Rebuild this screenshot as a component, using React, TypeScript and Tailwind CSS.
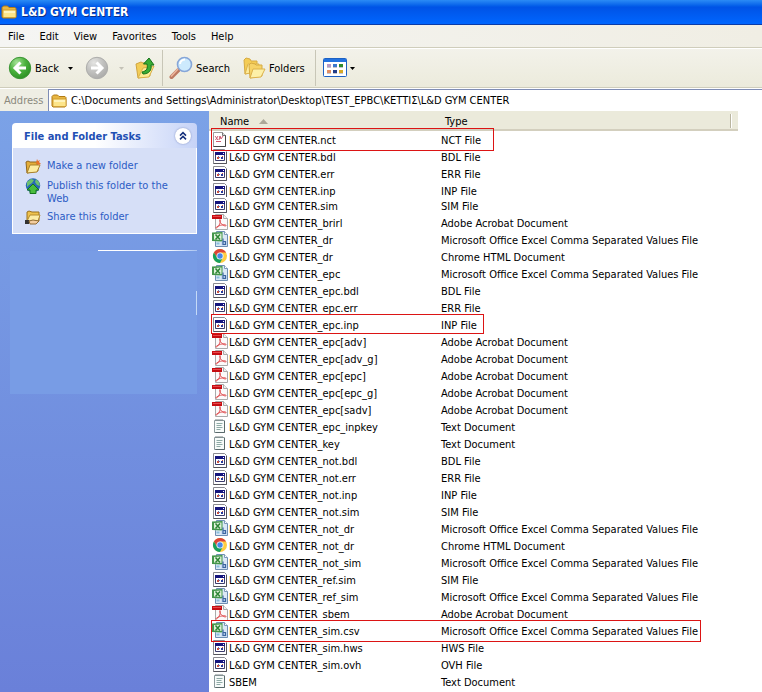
import type { ReactNode } from "react";

type Kind = "nct" | "file" | "pdf" | "xls" | "chrome" | "text";

type Entry = {
  name: string;
  type: string;
  kind: Kind;
  /** Place and size of the red outline, when the row is marked. */
  mark?: string;
  clipped?: boolean;
};

const CSV = "Microsoft Office Excel Comma Separated Values File";
const PDF = "Adobe Acrobat Document";
const HTML = "Chrome HTML Document";
const TXT = "Text Document";

const ENTRIES: Entry[] = [
  { name: "L&D GYM CENTER.nct", type: "NCT File", kind: "nct", mark: "-top-[3px] h-[23px] w-[283px]" },
  { name: "L&D GYM CENTER.bdl", type: "BDL File", kind: "file" },
  { name: "L&D GYM CENTER.err", type: "ERR File", kind: "file" },
  { name: "L&D GYM CENTER.inp", type: "INP File", kind: "file", clipped: true },
  { name: "L&D GYM CENTER.sim", type: "SIM File", kind: "file" },
  { name: "L&D GYM CENTER_brirl", type: PDF, kind: "pdf" },
  { name: "L&D GYM CENTER_dr", type: CSV, kind: "xls" },
  { name: "L&D GYM CENTER_dr", type: HTML, kind: "chrome" },
  { name: "L&D GYM CENTER_epc", type: CSV, kind: "xls" },
  { name: "L&D GYM CENTER_epc.bdl", type: "BDL File", kind: "file" },
  { name: "L&D GYM CENTER_epc.err", type: "ERR File", kind: "file" },
  { name: "L&D GYM CENTER_epc.inp", type: "INP File", kind: "file", mark: "-top-0.5 h-5 w-[273px]" },
  { name: "L&D GYM CENTER_epc[adv]", type: PDF, kind: "pdf" },
  { name: "L&D GYM CENTER_epc[adv_g]", type: PDF, kind: "pdf" },
  { name: "L&D GYM CENTER_epc[epc]", type: PDF, kind: "pdf" },
  { name: "L&D GYM CENTER_epc[epc_g]", type: PDF, kind: "pdf" },
  { name: "L&D GYM CENTER_epc[sadv]", type: PDF, kind: "pdf" },
  { name: "L&D GYM CENTER_epc_inpkey", type: TXT, kind: "text" },
  { name: "L&D GYM CENTER_key", type: TXT, kind: "text" },
  { name: "L&D GYM CENTER_not.bdl", type: "BDL File", kind: "file" },
  { name: "L&D GYM CENTER_not.err", type: "ERR File", kind: "file" },
  { name: "L&D GYM CENTER_not.inp", type: "INP File", kind: "file" },
  { name: "L&D GYM CENTER_not.sim", type: "SIM File", kind: "file" },
  { name: "L&D GYM CENTER_not_dr", type: CSV, kind: "xls" },
  { name: "L&D GYM CENTER_not_dr", type: HTML, kind: "chrome" },
  { name: "L&D GYM CENTER_not_sim", type: CSV, kind: "xls" },
  { name: "L&D GYM CENTER_ref.sim", type: "SIM File", kind: "file" },
  { name: "L&D GYM CENTER_ref_sim", type: CSV, kind: "xls" },
  { name: "L&D GYM CENTER_sbem", type: PDF, kind: "pdf" },
  { name: "L&D GYM CENTER_sim.csv", type: CSV, kind: "xls", mark: "-top-0.5 h-[22px] w-[490px]" },
  { name: "L&D GYM CENTER_sim.hws", type: "HWS File", kind: "file" },
  { name: "L&D GYM CENTER_sim.ovh", type: "OVH File", kind: "file" },
  { name: "SBEM", type: TXT, kind: "text" },
];

const MENUS = ["File", "Edit", "View", "Favorites", "Tools", "Help"];

function Svg({ children, className = "h-4 w-4" }: { children: ReactNode; className?: string }) {
  return (
    <svg viewBox="0 0 16 16" className={`shrink-0 ${className}`} aria-hidden="true">
      {children}
    </svg>
  );
}

function FileIcon({ kind }: { kind: Kind }) {
  switch (kind) {
    case "nct":
      return (
        <Svg>
          <path d="M1.5 1.5h9l3 3v11h-12z" fill="#fff" stroke="#9b9b9b" />
          <path d="M13.5 4v11.5h-12" fill="none" stroke="#444" />
          <path d="M10.5 1.5v3h3" fill="#ddd" stroke="#777" />
          <path d="M3 5l3 4M6 5l-2.500 4M7 9l1-4 1 3 2-3M4 10.500h5" fill="none" stroke="#cf5a70" />
        </Svg>
      );
    case "file":
      return (
        <Svg>
          <path d="M1.5 1.500h11l2 2v12h-13z" fill="#fff" stroke="#8a8a90" />
          <path d="M14.500 4v11.500h-13" fill="none" stroke="#55555c" />
          <path d="M3.500 4.500h9v8h-9z" fill="#fff" stroke="#3c3c6c" />
          <path d="M3 4h10v3H3z" fill="#15157d" />
          <path d="M11 5h1v1h-1z" fill="#fff" />
          <path d="M5 9h2v2H5z" fill="#c9503c" />
          <path d="M6 8h1v1H6zM7 9h1v1H7z" fill="#6472c0" />
          <path d="M9 9h2v2H9z" fill="#283b9c" />
          <path d="M10 8h1v1h-1z" fill="#c9503c" />
        </Svg>
      );
    case "pdf":
      return (
        <Svg>
          <path d="M3.500.5h8l4 4v11h-12z" fill="#fbfafa" stroke="#aaa" />
          <path d="M11.500.5v4h4" fill="#eee" stroke="#aaa" />
          <path d="M0 1h10v4H0z" fill="#c60d12" />
          <path d="M1 2h8v1H1z" fill="#e7484a" />
          <path
            d="M4.500 14c1.500-.5 4-4.500 4-7.500 0-1.500-1.200-1.200-1 0 .4 2.500 3 5 5.500 5.500 1.500.2 1.500-1 0-1.200-2.500-.3-6 .7-8.500 2.200-1 .8-.7 1.200 0 1z"
            fill="none"
            stroke="#df4a4c"
            strokeWidth=".9"
          />
        </Svg>
      );
    case "xls":
      return (
        <Svg>
          <path d="M4.500.5h8l3 3v12h-12v-5z" fill="#dbe8f6" stroke="#6f8fb3" />
          <path d="M12.500.5v3h3" fill="#fff" stroke="#7c98b8" />
          <path d="M0 1.500L10.500 1v9.500L0 10z" fill="#43964a" />
          <path d="M2 3l7.500-.5V9L2 8.500z" fill="#dff1d9" />
          <path d="M3.500 3.500l4.500 5M8 3.500l-4.500 5" stroke="#2d8535" strokeWidth="1.500" />
          <path d="M9.500 10.500h5v4h-5z" fill="#b9d0ec" />
          <path d="M11 7.500v6h2.500v-3H11" fill="none" stroke="#3c66a0" strokeWidth="1.200" />
          <path d="M4.500 11.500h3v2h-3z" fill="#8bc0dc" />
        </Svg>
      );
    case "chrome":
      return (
        <Svg>
          <circle cx="8" cy="8" r="7" fill="#ffcd41" />
          <path d="M1.900 4.500A7 7 0 0 1 14.100 4.500H8L5 9.500z" fill="#db4437" />
          <path d="M1.900 4.500A7 7 0 0 0 8 15l3-5.500H5z" fill="#16a05d" />
          <circle cx="8" cy="8" r="3.500" fill="#f5f5f5" />
          <circle cx="8" cy="8" r="2.700" fill="#4688e8" />
        </Svg>
      );
    case "text":
      return (
        <Svg>
          <path d="M2.500 2.500h10v12h-10z" fill="#f7fbfa" stroke="#8c9a9c" />
          <path d="M12.500 3v11.500h-9" fill="none" stroke="#59696b" />
          <path d="M4 1v2M6 1v2M8 1v2M10 1v2" stroke="#7a8688" />
          <path d="M4.500 5.500h6M4.500 7.500h5M4.500 9.500h6M4.500 11.500h4" stroke="#8eaaa6" />
        </Svg>
      );
  }
}

function FolderIcon({ className }: { className?: string }) {
  return (
    <Svg className={className}>
      <path d="M1 3.500L2.500 2h4L8 3.500h6l1 1V13l-1 1H2l-1-1z" fill="#e8b743" stroke="#b27b14" />
      <path d="M2 6h13v7.500H2z" fill="#fde58a" stroke="#c79329" strokeWidth=".7" />
      <path d="M3 7h11v2H3z" fill="#fff4bd" />
    </Svg>
  );
}

function Caret({ className = "" }: { className?: string }) {
  return (
    <svg viewBox="0 0 5 3" className={`h-[3px] w-[5px] ${className}`} aria-hidden="true">
      <path d="M0 0h5L2.500 3z" fill="currentColor" />
    </svg>
  );
}

function RoundArrow({ forward = false }: { forward?: boolean }) {
  const id = forward ? "forward-fill" : "back-fill";
  return (
    <svg viewBox="0 0 24 24" className="h-6 w-6 shrink-0" aria-hidden="true">
      <defs>
        <radialGradient id={id} cx=".35" cy=".25" r=".8">
          <stop offset="0" stopColor={forward ? "#e4e4e2" : "#a6e298"} />
          <stop offset=".5" stopColor={forward ? "#c3c3c1" : "#4cb33e"} />
          <stop offset="1" stopColor={forward ? "#aaaaa8" : "#2b8f22"} />
        </radialGradient>
      </defs>
      <circle cx="12" cy="12" r="10.700" fill={`url(#${id})`} stroke={forward ? "#adadab" : "#3c9535"} />
      <path
        d={forward ? "M6 12h10M11.500 6.500L17 12l-5.500 5.500" : "M18 12H8M12.500 6.500L7 12l5.500 5.500"}
        fill="none"
        stroke="#fff"
        strokeWidth="3"
      />
    </svg>
  );
}

function UpFolder() {
  return (
    <svg viewBox="0 0 22 22" className="h-[22px] w-[22px]" aria-hidden="true">
      <path d="M2 7l5-2 2 1 6-1 1 14-12 2z" fill="#f3cd57" stroke="#d0a440" />
      <path d="M4 21l5-10 11-2-5 11z" fill="#fdeb93" stroke="#d9b04a" />
      <path d="M8 15c5-1 6-4 5-8H9.500L15 1l5 7h-3c1 5-2 9-8 9z" fill="#39ad34" stroke="#17721b" />
    </svg>
  );
}

function Magnifier() {
  return (
    <svg viewBox="0 0 24 24" className="h-6 w-6" aria-hidden="true">
      <path d="M2.500 21L9.500 14" stroke="#bd7a62" strokeWidth="4" strokeLinecap="round" />
      <path d="M2 20.500L9 13" stroke="#edb79e" strokeWidth="1.500" />
      <circle cx="15.500" cy="8.500" r="7" fill="#cdeafd" stroke="#86a6d8" strokeWidth="1.600" />
      <path d="M11 8a5 5 0 0 1 5-4.500" fill="none" stroke="#fff" strokeWidth="2" />
    </svg>
  );
}

function FoldersIcon() {
  return (
    <svg viewBox="0 0 24 22" className="h-[22px] w-6" aria-hidden="true">
      <path d="M2 3l2-2 4 1 1 2h6v10L3 17z" fill="#f4cc55" stroke="#d6ab42" />
      <path d="M3 17L6 7h11l-3 8z" fill="#fdec9c" stroke="#dcb24c" />
      <path d="M7 8l2-2 4 1 1 1h6v11l-12 2z" fill="#f6d367" stroke="#d6ab42" />
      <path d="M8 21l3-9h12l-4 8z" fill="#fdf0a8" stroke="#dcb24c" />
    </svg>
  );
}

function ViewsIcon() {
  const dots = ["#b79ac4", "#3b78cd", "#2c8a2b", "#e08e63", "#203c88", "#d6a824"];
  return (
    <svg viewBox="0 0 24 20" className="h-5 w-6" aria-hidden="true">
      <rect x=".5" y=".5" width="23" height="18" rx="1" fill="#fff" stroke="#1c61c4" />
      <path d="M1 1h22v3H1z" fill="#2272df" />
      {dots.map((fill, i) => (
        <g key={fill}>
          <rect x={4 + (i % 3) * 6} y={i < 3 ? 6 : 12} width="4" height="3" fill={fill} />
          <path d={`M${4 + (i % 3) * 6} ${i < 3 ? 9.5 : 15.5}h4`} stroke="#c5c5cf" />
        </g>
      ))}
    </svg>
  );
}

function Toolbar() {
  return (
    <div className="flex h-10 items-center border-y border-t-white border-b-[#cfcdbb] bg-gradient-to-b from-[#f3f2ea] to-[#ecebdc] pl-2">
      <button type="button" className="flex items-center gap-[3px]">
        <RoundArrow />
        Back
        <Caret className="ml-1.5" />
      </button>
      <button type="button" aria-label="Forward" className="ml-3 flex items-center gap-2.5 text-[#c4c2b7]">
        <RoundArrow forward />
        <Caret />
      </button>
      <button type="button" aria-label="Up" className="ml-2.5">
        <UpFolder />
      </button>
      <span className="ml-1.5 h-9 w-px bg-[#c8c6b7]" />
      <button type="button" className="ml-1.5 flex items-center gap-[3px]">
        <Magnifier />
        Search
      </button>
      <button type="button" className="ml-3 flex items-center gap-[3px]">
        <FoldersIcon />
        Folders
      </button>
      <span className="ml-2.5 h-9 w-px bg-[#c8c6b7]" />
      <button type="button" aria-label="Views" className="ml-[7px] flex items-center gap-[3px]">
        <ViewsIcon />
        <Caret />
      </button>
    </div>
  );
}

function Task({ icon, children }: { icon: ReactNode; children: ReactNode }) {
  return (
    <li>
      <a href="#" className="flex items-start gap-1.5">
        {icon}
        <span className="pt-px">{children}</span>
      </a>
    </li>
  );
}

function Sidebar() {
  return (
    <aside className="w-[209px] shrink-0 bg-gradient-to-b from-[#7ba2e7] to-[#6a80d9] px-3 pt-3">
      <section className="text-[#2c5cc5]">
        <header className="flex h-[25px] items-center justify-between rounded-t-[4px] bg-gradient-to-r from-white from-45% to-[#c6d3f7] pr-1.5 pl-3">
          <h2 className="pt-0.5 font-bold text-[#1f50b4]">File and Folder Tasks</h2>
          <button
            type="button"
            aria-label="Collapse"
            className="flex h-4 w-4 items-center justify-center rounded-full bg-white shadow-[0_0_2px_#7b8cc0]"
          >
            <Svg className="h-3 w-3">
              <path d="M4 7.500L8 3.500l4 4M4 12.500l4-4 4 4" fill="none" stroke="#15307c" strokeWidth="2" />
            </Svg>
          </button>
        </header>
        <ul className="space-y-1 border border-t-0 border-white bg-[#d6dff7] pt-2.5 pr-5 pb-2 pl-3 leading-[13px]">
          <Task
            icon={
              <Svg>
                <path d="M1 4l2-1 2 1h7l1 9-11 2z" fill="#e4ad39" stroke="#8f661d" />
                <path d="M2 15l3-8h10l-3 7z" fill="#fdeca0" stroke="#a9812c" />
                <path d="M12 1l1 2 2-1-1 2 2 2-3 1-2-2z" fill="#e7742b" />
              </Svg>
            }
          >
            Make a new folder
          </Task>
          <Task
            icon={
              <Svg>
                <circle cx="8" cy="7.500" r="7.200" fill="#2868b5" />
                <path d="M2 4l4-3 3 1-2 3-3 2-2 2zM11 1l3 3 1 4-3-1-2-3z" fill="#6cc06f" />
                <path d="M8 6l6 6h-3v3.500H5V12H2z" fill="#49bd3e" stroke="#14761c" />
              </Svg>
            }
          >
            Publish this folder to the Web
          </Task>
          <Task
            icon={
              <Svg>
                <path d="M2 3l2-1 3 1h7v9l-12 1z" fill="#efc24d" stroke="#99701f" />
                <path d="M2 12l3-6h10l-2 6z" fill="#fdeda6" stroke="#b48b31" />
                <path d="M0 11h4v4H0z" fill="#333" />
                <path d="M4 12l4-1 6 1-3 3H5z" fill="#f3cda0" stroke="#906b32" />
              </Svg>
            }
          >
            Share this folder
          </Task>
        </ul>
      </section>
      <div className="mt-4 ml-[86px] h-px bg-gradient-to-r from-white from-70% to-[#a9c3f0]" />
      <div className="-ml-0.5 flex h-[143px] items-start justify-end bg-[#789ce5] pt-10">
        <span className="h-6 w-px bg-[#c5daf7]" />
      </div>
    </aside>
  );
}

function FileList() {
  return (
    <main className="min-w-0 flex-1 bg-white pr-6">
      <table className="w-full table-fixed border-collapse text-left">
        <colgroup>
          <col className="w-[232px]" />
          <col />
        </colgroup>
        <thead className="bg-[#ebeadb]">
          <tr>
            <th scope="col" className="p-0 font-normal">
              <div className="flex h-5 items-center gap-2.5 border-b-2 border-[#d3cfbe] pt-0.5 pl-[11px]">
                Name
                <svg viewBox="0 0 9 5" className="h-[5px] w-[9px]" aria-hidden="true">
                  <path d="M0 5h9L4.500 0z" fill="#aca899" />
                </svg>
              </div>
            </th>
            <th scope="col" className="p-0 font-normal">
              <div className="flex h-5 items-center justify-between border-b-2 border-[#d3cfbe] pt-0.5 pr-1.5 pl-1">
                Type
                <span className="h-3.5 w-0.5 border-r border-l border-r-white border-l-[#b9b5a0]" />
              </div>
            </th>
          </tr>
        </thead>
        <tbody>
          {ENTRIES.map((entry) => (
            <tr key={`${entry.name}-${entry.type}`}>
              <td className="p-0">
                <div className={`relative ${entry.clipped ? "h-[15px] overflow-hidden" : "h-[17px]"}`}>
                  <div className="flex items-start gap-px pl-[3px] leading-[19px] whitespace-nowrap">
                    <FileIcon kind={entry.kind} />
                    {entry.name}
                  </div>
                  {entry.mark && (
                    <span className={`absolute left-0.5 z-10 border border-[#dc1414] ${entry.mark}`} />
                  )}
                </div>
              </td>
              <td className="p-0">
                <div
                  className={`leading-[19px] whitespace-nowrap ${entry.clipped ? "h-[15px] overflow-hidden" : "h-[17px]"}`}
                >
                  {entry.type}
                </div>
              </td>
            </tr>
          ))}
        </tbody>
      </table>
    </main>
  );
}

export default function App() {
  return (
    <div className="flex min-h-screen flex-col bg-white font-[Tahoma,'DejaVu_Sans_Condensed','Noto_Sans',sans-serif] text-[11px] leading-[13px] text-black">
      <header className="flex h-[25px] items-center gap-1 border-b border-[#0a3ba8] bg-gradient-to-b from-[#2b8bf5] via-[#0053e6] via-30% to-[#0066ff] pl-px">
        <FolderIcon />
        <h1 className="text-[12px] font-bold text-white [text-shadow:1px_1px_#0a2f88]">L&amp;D GYM CENTER</h1>
      </header>

      <nav className="flex h-[23px] items-center gap-[15px] border-b border-[#cfcdbb] bg-gradient-to-r from-[#f5f5f3] to-[#f0eee4] pl-2">
        {MENUS.map((menu) => (
          <button key={menu} type="button">
            {menu}
          </button>
        ))}
      </nav>

      <Toolbar />

      <div className="flex h-[23px] border-t border-white bg-[#efeee4]">
        <label htmlFor="address" className="flex w-12 items-center pl-1 text-[#8b897d]">
          Address
        </label>
        <div className="flex min-w-0 flex-1 items-center gap-1 border-t border-l border-[#7f8db5] bg-white pl-0.5">
          <FolderIcon />
          <input
            id="address"
            type="text"
            defaultValue="C:\Documents and Settings\Administrator\Desktop\TEST_EPBC\ΚΕΤΤΙΣ\L&D GYM CENTER"
            className="min-w-0 flex-1 outline-none"
          />
        </div>
      </div>

      <div className="flex flex-1">
        <Sidebar />
        <FileList />
      </div>
    </div>
  );
}
